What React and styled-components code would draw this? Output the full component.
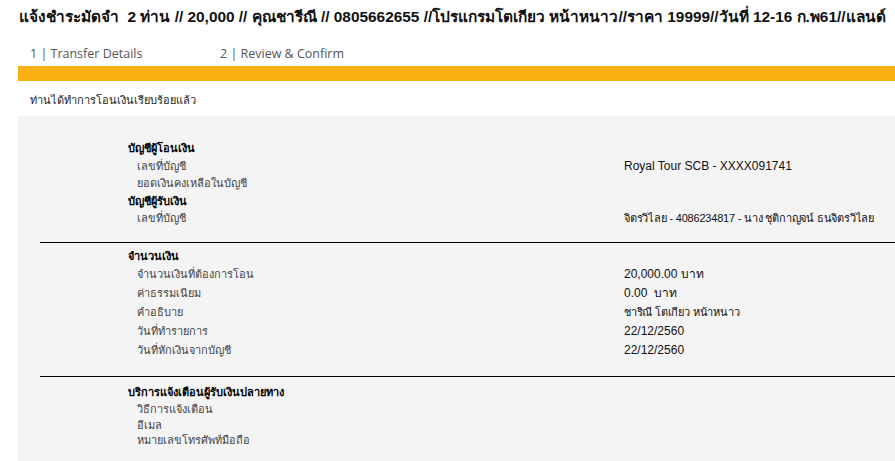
import React from 'react';
import styled, { createGlobalStyle } from 'styled-components';

const GlobalStyle = createGlobalStyle`
  html, body {
    margin: 0;
    padding: 0;
    background: #fff;
  }
  body {
    font-family: "Liberation Sans", Arial, sans-serif;
    color: #222;
    overflow: hidden;
  }
`

const Page = styled.div`
  width: 895px;
  height: 461px;
  overflow: hidden;
  padding-left: 18px;
  box-sizing: border-box;
`

const Title = styled.h1`
  margin: 0;
  padding: 8px 0 0 1px;
  height: 18px;
  line-height: 18px;
  font-size: 15.4px;
  font-weight: 700;
  color: #111;
  white-space: nowrap;
  overflow: hidden;
`

const Tabs = styled.div`
  display: flex;
  padding: 19px 0 0 12px;
  height: 21px;
`

const Tab = styled.div`
  width: 190px;
  font-family: "Open Sans", sans-serif;
  font-size: 12.5px;
  line-height: 18px;
  color: #555;
  white-space: nowrap;
`

const Bar = styled.div`
  height: 15px;
  background: #fbaf10;
`

const Notice = styled.p`
  margin: 0;
  padding: 11px 0 0 12px;
  height: 24px;
  font-size: 11px;
  line-height: 16px;
  color: #222;
`

const Panel = styled.div`
  background: #f4f4f4;
  padding-top: 24px;
  height: 345px;
`

const Section = styled.div`
  padding: ${p => p.$top || 0}px 0 ${p => p.$bottom || 0}px 110px;
`

const Heading = styled.div`
  font-size: 11px;
  font-weight: 700;
  line-height: ${p => p.$h || 17.5}px;
  color: #000;
`

const Row = styled.div`
  display: grid;
  grid-template-columns: 487px 1fr;
  padding-left: 9px;
  height: ${p => p.$h || 17.5}px;
  line-height: ${p => p.$h || 17.5}px;
  font-size: 11px;
  white-space: nowrap;
`

const Label = styled.span`
  color: #444;
`

const Value = styled.span`
  color: #111;
  font-size: ${p => (p.$thai ? 11 : 12)}px;
  letter-spacing: ${p => (p.$thai ? '-0.2px' : 'normal')};
`

const Divider = styled.hr`
  margin: 0 0 0 22px;
  border: none;
  border-top: 1px solid #000;
`

const App = () => (
  <Page>
    <GlobalStyle />
    <Title>แจ้งชำระมัดจำ&nbsp; 2 ท่าน // 20,000 // คุณชารีณี // 0805662655 //โปรแกรมโตเกียว หน้าหนาว//ราคา 19999//วันที่ 12-16 ก.พ61//แลนด์</Title>
    <Tabs>
      <Tab>1 | Transfer Details</Tab>
      <Tab>2 | Review &amp; Confirm</Tab>
    </Tabs>
    <Bar />
    <Notice>ท่านได้ทำการโอนเงินเรียบร้อยแล้ว</Notice>
    <Panel>
      <Section $bottom={14}>
        <Heading>บัญชีผู้โอนเงิน</Heading>
        <Row>
          <Label>เลขที่บัญชี</Label>
          <Value>Royal Tour SCB - XXXX091741</Value>
        </Row>
        <Row>
          <Label>ยอดเงินคงเหลือในบัญชี</Label>
          <Value></Value>
        </Row>
        <Heading>บัญชีผู้รับเงิน</Heading>
        <Row>
          <Label>เลขที่บัญชี</Label>
          <Value $thai>จิตรวิไลย - 4086234817 - นาง ชุติกาญจน์ ธนจิตรวิไลย</Value>
        </Row>
      </Section>
      <Divider />
      <Section $top={4} $bottom={16}>
        <Heading $h={18}>จำนวนเงิน</Heading>
        <Row $h={19}>
          <Label>จำนวนเงินที่ต้องการโอน</Label>
          <Value>20,000.00 บาท</Value>
        </Row>
        <Row $h={19}>
          <Label>ค่าธรรมเนียม</Label>
          <Value>0.00&nbsp; บาท</Value>
        </Row>
        <Row $h={19}>
          <Label>คำอธิบาย</Label>
          <Value $thai>ชาริณี โตเกียว หน้าหนาว</Value>
        </Row>
        <Row $h={19}>
          <Label>วันที่ทำรายการ</Label>
          <Value>22/12/2560</Value>
        </Row>
        <Row $h={19}>
          <Label>วันที่หักเงินจากบัญชี</Label>
          <Value>22/12/2560</Value>
        </Row>
      </Section>
      <Divider />
      <Section $top={6}>
        <Heading $h={18}>บริการแจ้งเตือนผู้รับเงินปลายทาง</Heading>
        <Row $h={17}>
          <Label>วิธีการแจ้งเตือน</Label>
        </Row>
        <Row $h={15}>
          <Label>อีเมล</Label>
        </Row>
        <Row $h={15}>
          <Label>หมายเลขโทรศัพท์มือถือ</Label>
        </Row>
      </Section>
    </Panel>
  </Page>
);

export default App;
